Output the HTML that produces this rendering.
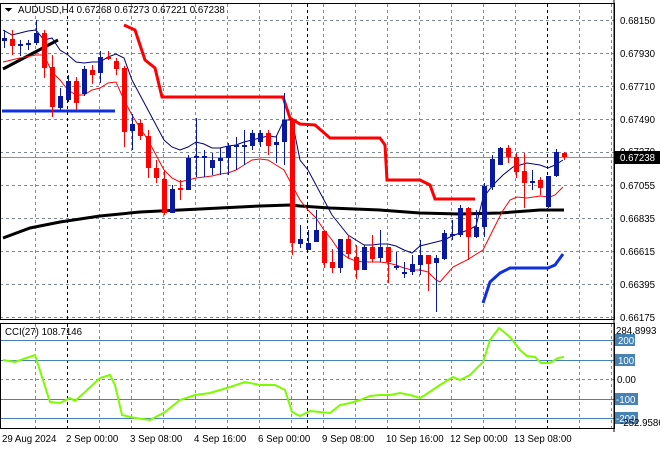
<!DOCTYPE html>
<html><head><meta charset="utf-8"><style>
html,body{margin:0;padding:0;background:#fff;}
svg{display:block;font-family:"Liberation Sans",Tahoma,sans-serif;font-size:9.7px;}
</style></head><body>
<svg id="s" width="660" height="450" viewBox="0 0 660 450" xmlns="http://www.w3.org/2000/svg" shape-rendering="crispEdges">
<rect width="660" height="450" fill="#fff"/>
<g id="grid" stroke="#7d8a96" stroke-dasharray="3,3" stroke-width="1"></g>
<g id="sep" stroke="#000" stroke-dasharray="3,3" stroke-width="1">
<line x1="67.5" y1="4" x2="67.5" y2="319"/><line x1="307.5" y1="4" x2="307.5" y2="319"/><line x1="547.5" y1="4" x2="547.5" y2="319"/>
<line x1="67.5" y1="324" x2="67.5" y2="428"/><line x1="307.5" y1="324" x2="307.5" y2="428"/><line x1="547.5" y1="324" x2="547.5" y2="428"/>
</g>
<g stroke="#4682b4" stroke-width="1">
<line x1="0" y1="340.5" x2="614" y2="340.5"/><line x1="0" y1="360.5" x2="614" y2="360.5"/>
<line x1="0" y1="399.5" x2="614" y2="399.5"/><line x1="0" y1="418.5" x2="614" y2="418.5"/>
</g>
<line x1="0" y1="379.5" x2="614" y2="379.5" stroke="#7d8a96" stroke-dasharray="3,3"/>
<line x1="0" y1="157.5" x2="614" y2="157.5" stroke="#8a939b"/>
<g fill="none" shape-rendering="auto">
<polyline stroke="#000" stroke-width="3" points="3,238 30,228 60,222 100,216 140,212 180,210 220,208 260,206 290,205 300,206 330,208 380,210 420,213 460,214 500,213 540,210 564,210"/>
<polyline stroke="#000" stroke-width="3" points="3,69 58,40"/>
<polyline stroke="#1030e0" stroke-width="3" points="2,111 115,111"/>
<polyline stroke="#1030e0" stroke-width="3" points="483,303 490,282 500,273 510,268 548,268 555,265 563,254"/>
<polyline stroke="#ff0000" stroke-width="3" points="124,25 135,30 145,60 155,68 162,97 283,97 290,118 300,124 315,125 330,138 380,138 385,145 387,180 420,180 430,185 435,199 475,199"/>
<polyline stroke="#00007a" stroke-width="1" points="3,30 12,35 20,33 28,31 36,30 44,40 52,38 60,50 68,55 76,62 84,63 92,62 100,62 108,57 116,54 124,58 132,80 140,95 148,110 156,125 164,140 172,147 180,150 188,147 196,142 204,144 212,148 220,148 228,146 236,145 244,142 252,140 260,138 268,136 276,137 284,120 292,120 300,160 308,170 316,185 324,200 332,215 340,225 348,235 356,240 364,245 372,245 380,244 388,244 396,246 404,250 412,253 420,246 428,244 436,242 444,240 452,236 460,233 468,230 476,226 483,198 493,185 503,175 513,167 527,163 540,165 548,168 555,165 563,160"/>
<polyline stroke="#ff0000" stroke-width="1" points="3,62 20,58 36,55 44,55 52,72 60,80 68,90 76,95 84,95 92,90 100,88 108,83 116,82 124,100 132,115 140,128 148,140 156,155 164,170 172,178 180,182 188,180 196,178 204,177 212,176 220,174 228,173 236,170 244,165 252,160 260,159 268,160 276,165 284,170 292,185 300,200 308,210 316,218 324,230 332,240 340,252 348,258 356,261 364,262 372,262 380,262 388,263 396,265 404,268 412,270 420,270 428,272 436,280 440,282 453,267 467,260 483,250 493,230 502,212 510,200 517,197 527,198 540,196 550,197 555,195 563,187"/>
<polyline stroke="#7cfc00" stroke-width="2" points="3,360 15,362 35,355 50,402 60,403 70,398 75,401 85,392 100,378 110,375 115,385 122,415 135,418 150,420 165,412 180,400 195,395 210,393 230,387 245,382 260,385 275,385 285,390 292,412 300,416 310,411 320,412 330,413 340,405 350,403 360,400 370,396 380,395 390,395 400,393 410,395 420,398 425,395 440,385 453,377 460,380 470,375 483,362 490,340 499,328 510,337 520,350 527,356 535,357 541,363 550,363 558,358 564,357"/>
</g>
<g id="c"></g>
<g stroke="#000" fill="none">
<rect x="0.5" y="3.5" width="614" height="316"/>
<rect x="0.5" y="323.5" width="614" height="105"/>
</g>
<g stroke="#000"><line x1="614" y1="0" x2="614" y2="432"/></g>
<path d="M5 8 L12 8 L8.5 12 Z" fill="#000"/>
<text x="18" y="13" fill="#000">AUDUSD,H4  0.67268 0.67273 0.67221 0.67238</text>
<text x="5" y="335" fill="#000">CCI(27) 108.7146</text>
<g fill="#000">
<text x="620" y="24">0.68150</text><text x="620" y="57">0.67930</text><text x="620" y="90">0.67710</text>
<text x="620" y="123">0.67490</text><text x="620" y="155">0.67270</text><text x="620" y="189">0.67055</text>
<text x="620" y="222">0.66835</text><text x="620" y="255">0.66615</text><text x="620" y="288">0.66395</text>
<text x="620" y="321">0.66175</text>
</g>
<rect x="615" y="151" width="45" height="13" fill="#000"/>
<text x="620" y="161" fill="#fff">0.67238</text>
<g fill="#4682b4">
<rect x="615" y="334" width="20" height="12"/><rect x="615" y="354" width="20" height="12"/>
<rect x="615" y="393" width="23" height="12"/><rect x="615" y="412" width="23" height="12"/>
</g>
<g fill="#000">
<text x="616" y="334">284.8993</text>
<text x="618" y="344" fill="#fff">200</text><text x="618" y="364" fill="#fff">100</text>
<text x="617" y="383">0.00</text>
<text x="616" y="403" fill="#fff">-100</text><text x="616" y="422" fill="#fff">-200</text>
<text x="620" y="426">-252.9586</text>
</g>
<g fill="#000">
<text x="2" y="442">29 Aug 2024</text><text x="66" y="442">2 Sep 00:00</text><text x="130" y="442">3 Sep 08:00</text>
<text x="194" y="442">4 Sep 16:00</text><text x="258" y="442">6 Sep 00:00</text><text x="322" y="442">9 Sep 08:00</text>
<text x="386" y="442">10 Sep 16:00</text><text x="450" y="442">12 Sep 00:00</text><text x="514" y="442">13 Sep 08:00</text>
</g>
<script>
(function(){
var ns="http://www.w3.org/2000/svg",g=document.getElementById('grid');
function ln(p,x1,y1,x2,y2){var l=document.createElementNS(ns,'line');l.setAttribute('x1',x1);l.setAttribute('y1',y1);l.setAttribute('x2',x2);l.setAttribute('y2',y2);p.appendChild(l);}
for(var x=35.5;x<614;x+=32){if(Math.abs(x-67.5)<1||Math.abs(x-547.5)<1)continue;ln(g,x,4,x,319);ln(g,x,324,x,428);}
for(var y=20.5;y<320;y+=33)ln(g,0,y,614,y);
var d=[
"b,38,41,30,48","r,39,46,30,55","b,44,46,40,56","b,43,45,40,50","b,33,43,20,45","r,33,68,30,78","r,67,107,55,117","b,96,108,88,110","b,81,100,75,102","r,81,103,77,110","b,69,94,66,96","r,70,75,65,84","b,57,73,51,83","r,57,59,51,60","r,61,69,58,75","r,68,132,66,147","b,124,131,114,150","r,123,136,120,140","r,136,168,130,178","r,168,178,160,183","r,179,213,170,215","b,189,213,185,213","r,188,190,180,200","b,158,190,155,190","b,156,158,118,177","b,156,157,150,177","b,160,168,153,175","b,158,161,148,175","b,146,158,143,175","b,145,147,137,170","b,145,147,130,165","b,133,146,130,150","b,133,142,130,147","r,133,146,130,155","b,142,145,135,163","b,120,142,93,165","r,120,243,118,255","b,239,244,225,248","b,243,250,230,250","b,230,242,210,242","r,231,263,231,268","r,262,268,249,273","b,239,268,239,273","r,239,254,235,258","r,257,270,245,279","b,247,270,245,270","r,247,259,235,262","b,247,258,230,262","r,247,262,247,283","b,266,268,252,270","b,272,273,262,278","b,264,272,255,275","b,255,265,240,275","r,255,264,255,291","b,258,263,255,312","b,233,259,230,260","b,234,236,220,240","b,208,235,205,237","r,208,237,207,260","b,227,237,210,238","b,186,227,183,237","b,159,187,155,190","b,148,165,147,165","r,148,157,145,163","r,157,172,153,178","r,171,183,153,208","b,181,183,170,190","r,180,188,177,195","b,176,207,176,208","b,152,176,149,177","r,153,157,152,160"];
var c=document.getElementById('c');
d.forEach(function(s,i){var a=s.split(','),col=a[0]=='b'?'#0818a0':'#ff0000',x=4+8*i;
var w=document.createElementNS(ns,'rect');w.setAttribute('x',x);w.setAttribute('y',a[3]);w.setAttribute('width',1);w.setAttribute('height',Math.max(1,a[4]-a[3]));w.setAttribute('fill',col);c.appendChild(w);
var b=document.createElementNS(ns,'rect');b.setAttribute('x',x-2);b.setAttribute('y',a[1]);b.setAttribute('width',5);b.setAttribute('height',Math.max(2,a[2]-a[1]));b.setAttribute('fill',col);c.appendChild(b);});
})();
</script>
</svg>
</body></html>
